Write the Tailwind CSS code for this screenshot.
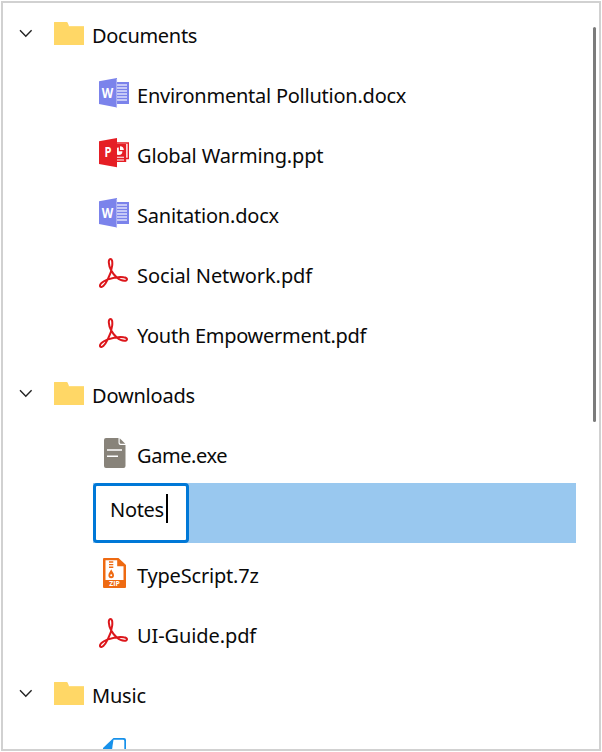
<!DOCTYPE html>
<html lang="en">
<head>
<meta charset="utf-8">
<title>File explorer</title>
<script src="https://cdn.jsdelivr.net/npm/@tailwindcss/browser@4"></script>
</head>
<body class="bg-white">
<svg class="hidden">
  <symbol id="chevron" viewBox="0 0 14 9"><path d="M1 1.2 6.8 7.2 12.6 1.2" fill="none" stroke="#222" stroke-width="1.4"/></symbol>
  <symbol id="folder" viewBox="0 0 30 23"><path d="M0 0H13L15 4H30V23H0Z" fill="#ffe08a"/><path d="M0 1Q0 0 1 0H12.5Q13.5 0 14 1.5L14.8 4.7H30V23H0Z" fill="#ffd766"/></symbol>
  <symbol id="word" viewBox="0 0 30 30"><path d="M17 4H30V26H17Z" fill="#7b83eb"/><path d="M18 7H28M18 10H28M18 13H28M18 16H28M18 19H28M18 22H28" stroke="#dfe1fb" stroke-width="1.5"/><path d="M0 3.2 18 0V29.5L0 26Z" fill="#7b83eb"/><path d="M17.6 1V29" stroke="#c3c7f7" stroke-width=".7"/><text x="8.6" y="19.8" text-anchor="middle" textLength="11.5" lengthAdjust="spacingAndGlyphs" font-family="Open Sans, sans-serif" font-weight="700" font-size="14" fill="#fff">W</text></symbol>
  <symbol id="ppt" viewBox="0 0 30 30"><path d="M17 5H29.3V20.5H27" fill="none" stroke="#e51e25" stroke-width="1.4"/><path d="M17 6H27.2V24H17Z" fill="#e51e25"/><path d="M18 19.3H25M18 22H25" stroke="#fff" stroke-width="1.1"/><path d="M19.8 9.6V13.2H23.4A3.7 3.7 0 1 1 19.8 9.6Z" fill="#fff"/><path d="M21 8.3A3.8 3.8 0 0 1 24.8 12.1H21Z" fill="#fff"/><path d="M0 3.2 18 0V29.3L0 26Z" fill="#e51e25"/><text x="9" y="19.3" text-anchor="middle" textLength="7" lengthAdjust="spacingAndGlyphs" font-family="Open Sans, sans-serif" font-weight="700" font-size="13.5" fill="#fff">P</text></symbol>
  <symbol id="pdf" viewBox="0 0 30 30"><path d="M11.4 1C9 1 9.4 7 12 12C14.5 17 20 22.8 25.3 22.8C29 22.8 29 19.7 24.7 19.2C20 18.5 13.4 19.7 8.2 21.6C3.3 23.6 .2 26.6 1.1 28.4C2.3 30.3 6 27.4 8.6 21.7C11.3 16.7 12.8 11.7 13.2 7.5C13.6 3.2 13 1 11.4 1Z" fill="none" stroke="#dc171c" stroke-width="2" stroke-linejoin="round"/></symbol>
  <symbol id="doc" viewBox="0 0 22 30"><path d="M2 0H14.5V5Q14.5 7 16.5 7H21.5V28Q21.5 30 19.5 30H2Q0 30 0 28V2Q0 0 2 0Z" fill="#88837a"/><path d="M15.7 .3 21.3 5.8H17Q15.7 5.8 15.7 4.5Z" fill="#88837a"/><path d="M3 12H18M3 18.2H14" stroke="#fff" stroke-width="1.5"/></symbol>
  <symbol id="zip" viewBox="0 0 23 30"><path d="M1 0H15.5L23 7V29Q23 30 22 30H1Q0 30 0 29V1Q0 0 1 0Z" fill="#ee6a12"/><path d="M2.5 2.3H14.2V8.3H20.5V22H2.5Z" fill="#fff"/><path d="M6 4H10.3M6 6.6H10.3M6 9.2H10.3" stroke="#ee6a12" stroke-width="1.4"/><path d="M8.2 11.3C9 13.4 11 15 11 17.2A2.8 3 0 0 1 5.4 17.2C5.4 15 7.4 13.4 8.2 11.3Z" fill="#ee6a12"/><circle cx="8.2" cy="17.2" r="1" fill="#fff"/><text x="11.6" y="28" text-anchor="middle" textLength="10.5" lengthAdjust="spacingAndGlyphs" font-family="Open Sans, sans-serif" font-weight="700" font-size="6.5" fill="#fff">ZIP</text></symbol>
  <symbol id="music" viewBox="0 0 24 30"><path d="M10.5 0H21Q23 0 23 2V30H0V10Z" fill="#1791ea"/><path d="M10.5 1.7H20Q21.3 1.7 21.3 3V30H9V11.5Q9.5 9 9.5 8Z" fill="#fff"/></symbol>
</svg>
<main class="relative m-px flex h-[750px] w-[600px] flex-col overflow-hidden border-2 border-[#d1d1d1] bg-white font-['Noto_Sans','Open_Sans',sans-serif] text-[20px] leading-[28px] text-[#0a0a0a]">
  <div class="flex h-[60px] shrink-0 items-start pl-4"><svg class="mt-[26px] h-[9px] w-[14px]"><use href="#chevron"/></svg><svg class="ml-[21px] mt-[19px] h-[23px] w-[30px]"><use href="#folder"/></svg><span class="ml-2 mt-[19px] tracking-[-0.3px]">Documents</span></div>
  <div class="flex h-[60px] shrink-0 items-start pl-24"><svg class="mt-[15px] h-[30px] w-[30px]"><use href="#word"/></svg><span class="ml-2 mt-[19px] tracking-[-0.24px]">Environmental Pollution.docx</span></div>
  <div class="flex h-[60px] shrink-0 items-start pl-24"><svg class="mt-[15px] h-[30px] w-[30px]"><use href="#ppt"/></svg><span class="ml-2 mt-[19px] tracking-[-0.15px]">Global Warming.ppt</span></div>
  <div class="flex h-[60px] shrink-0 items-start pl-24"><svg class="mt-[15px] h-[30px] w-[30px]"><use href="#word"/></svg><span class="ml-2 mt-[19px] tracking-[-0.2px]">Sanitation.docx</span></div>
  <div class="flex h-[60px] shrink-0 items-start pl-24"><svg class="mt-[15px] h-[30px] w-[30px]"><use href="#pdf"/></svg><span class="ml-2 mt-[19px] tracking-[-0.09px]">Social Network.pdf</span></div>
  <div class="flex h-[60px] shrink-0 items-start pl-24"><svg class="mt-[15px] h-[30px] w-[30px]"><use href="#pdf"/></svg><span class="ml-2 mt-[19px] tracking-[-0.28px]">Youth Empowerment.pdf</span></div>
  <div class="flex h-[60px] shrink-0 items-start pl-4"><svg class="mt-[26px] h-[9px] w-[14px]"><use href="#chevron"/></svg><svg class="ml-[21px] mt-[19px] h-[23px] w-[30px]"><use href="#folder"/></svg><span class="ml-2 mt-[19px] tracking-[-0.2px]">Downloads</span></div>
  <div class="flex h-[60px] shrink-0 items-start pl-[101px]"><svg class="mt-[15px] h-[30px] w-[22px]"><use href="#doc"/></svg><span class="ml-[11px] mt-[19px] tracking-[-0.42px]">Game.exe</span></div>
  <div class="ml-[90px] flex h-[60px] w-[483px] shrink-0 bg-[#99c8ef]"><div class="flex w-24 items-start rounded-[4px] border-3 border-[#0078d7] bg-white pl-[14px]"><span class="mt-[10px] tracking-[-0.3px]">Notes</span><span class="ml-[2px] mt-[8px] h-[29px] w-[2px] bg-black"></span></div></div>
  <div class="flex h-[60px] shrink-0 items-start pl-[100px]"><svg class="mt-[15px] h-[30px] w-[23px]"><use href="#zip"/></svg><span class="ml-[11px] mt-[19px] tracking-[-0.2px]">TypeScript.7z</span></div>
  <div class="flex h-[60px] shrink-0 items-start pl-24"><svg class="mt-[15px] h-[30px] w-[30px]"><use href="#pdf"/></svg><span class="ml-2 mt-[19px] tracking-[-0.1px]">UI-Guide.pdf</span></div>
  <div class="flex h-[60px] shrink-0 items-start pl-4"><svg class="mt-[26px] h-[9px] w-[14px]"><use href="#chevron"/></svg><svg class="ml-[21px] mt-[19px] h-[23px] w-[30px]"><use href="#folder"/></svg><span class="ml-2 mt-[19px] tracking-[-0.2px]">Music</span></div>
  <div class="flex h-[60px] shrink-0 items-start pl-[100px]"><svg class="mt-[15px] h-[30px] w-[24px]"><use href="#music"/></svg></div>
  <div class="absolute right-[3px] top-6 h-[395px] w-[3px] rounded-full bg-[#7b7b7b]"></div>
</main>
</body>
</html>
